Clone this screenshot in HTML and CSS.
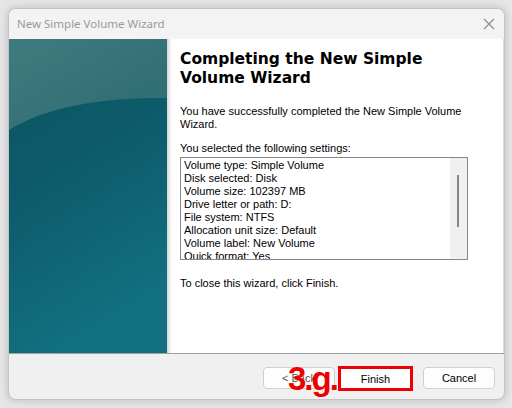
FILE: index.html
```html
<!DOCTYPE html>
<html>
<head>
<meta charset="utf-8">
<link rel="stylesheet" href="styles.css">
</head>
<body>
<div class="window">
  <div class="titlebar">
    <span class="title">New Simple Volume Wizard</span>
    <svg class="close" width="12" height="12" viewBox="0 0 12 12"><path d="M1 1L11 11M11 1L1 11" stroke="#8a8a8a" stroke-width="1.1" fill="none"/></svg>
  </div>
  <div class="content">
    <div class="banner">
      <svg width="158" height="314" viewBox="0 0 158 314" preserveAspectRatio="none">
        <defs>
          <linearGradient id="top" x1="0" y1="0" x2="1" y2="1">
            <stop offset="0" stop-color="#3f7b7e"/>
            <stop offset="1" stop-color="#2d6a72"/>
          </linearGradient>
          <linearGradient id="main" x1="0" y1="0" x2="0.3" y2="1">
            <stop offset="0" stop-color="#0b5260"/>
            <stop offset="0.5" stop-color="#0d5c6b"/>
            <stop offset="1" stop-color="#127080"/>
          </linearGradient>
        </defs>
        <rect width="158" height="314" fill="url(#main)"/>
        <path d="M0 0H158V59C100 58 40 66 0 91Z" fill="url(#top)"/>
      </svg>
    </div>
    <div class="shade"></div>
    <div class="page">
      <h1>Completing the New Simple Volume Wizard</h1>
      <p class="intro">You have successfully completed the New Simple Volume Wizard.</p>
      <p class="label">You selected the following settings:</p>
      <div class="listbox">
        <div class="items">
          <div>Volume type: Simple Volume</div>
          <div>Disk selected: Disk</div>
          <div>Volume size: 102397 MB</div>
          <div>Drive letter or path: D:</div>
          <div>File system: NTFS</div>
          <div>Allocation unit size: Default</div>
          <div>Volume label: New Volume</div>
          <div>Quick format: Yes</div>
        </div>
        <div class="scrollbar"><div class="thumb"></div></div>
      </div>
      <p class="closing">To close this wizard, click Finish.</p>
    </div>
  </div>
  <div class="footer">
    <button class="btn">&lt; Back</button>
    <button class="btn finish">Finish</button>
    <button class="btn cancel">Cancel</button>
    <span class="step">3.g.</span>
  </div>
</div>
</body>
</html>
```
FILE: styles.css
```css
html, body {
  margin: 0;
  padding: 0;
}
body {
  width: 512px;
  height: 408px;
  background: #e6e6e6;
  overflow: hidden;
  font-family: "Liberation Sans", Arial, sans-serif;
}
.window {
  box-sizing: border-box;
  margin: 8px 0 0 8px;
  width: 497px;
  height: 392px;
  border: 1px solid #c4c4c4;
  border-radius: 8px;
  background: #f0f0f0;
  box-shadow: 0 0 6px 2px rgba(0,0,0,0.12);
  overflow: hidden;
  display: flex;
  flex-direction: column;
}
.titlebar {
  height: 30px;
  flex: none;
  background: #f3f3f3;
  display: flex;
  align-items: center;
  justify-content: space-between;
  padding: 0 9px 0 8px;
}
.title {
  font-family: "Noto Sans", sans-serif;
  font-size: 11.5px;
  color: #9a9a9a;
  margin-top: -1px;
}
.close {
  display: block;
}
.content {
  height: 314px;
  flex: none;
  display: flex;
  background: #fff;
  border-right: 1px solid #dcdcdc;
}
.banner {
  width: 158px;
  flex: none;
}
.banner svg {
  display: block;
}
.shade {
  width: 5px;
  flex: none;
  background: linear-gradient(to right, #d4d4d4, #f4f4f4 70%, #fff);
}
.page {
  flex: 1;
  padding: 11px 0 0 8px;
  color: #000;
  font-size: 11px;
}
h1 {
  margin: 0;
  font-family: "DejaVu Sans", Verdana, sans-serif;
  font-weight: bold;
  font-size: 15.5px;
  line-height: 19px;
  width: 260px;
}
p {
  margin: 0;
  line-height: 13px;
}
.intro {
  margin-top: 17px;
  width: 295px;
}
.label {
  margin-top: 11px;
}
.listbox {
  margin-top: 2px;
  width: 288px;
  height: 103px;
  box-sizing: border-box;
  border: 1px solid #828790;
  display: flex;
  overflow: hidden;
  background: #fff;
}
.items {
  flex: 1;
  padding: 1px 0 0 3px;
  line-height: 13px;
  overflow: hidden;
}
.scrollbar {
  width: 17px;
  flex: none;
  background: #f0f0f0;
  position: relative;
}
.thumb {
  position: absolute;
  left: 7px;
  top: 17px;
  width: 2px;
  height: 52px;
  background: #858585;
}
.closing {
  margin-top: 17px;
}
.footer {
  flex: 1;
  border-top: 1px solid #a0a0a0;
  display: flex;
  align-items: flex-start;
  padding: 13px 0 0 254px;
  position: relative;
}
.btn {
  box-sizing: border-box;
  width: 72px;
  height: 22px;
  border: 1px solid #d0d0d0;
  border-radius: 4px;
  background: #fdfdfd;
  font-family: "Liberation Sans", Arial, sans-serif;
  font-size: 11px;
  color: #000;
  padding: 0;
}
.btn:first-child {
  color: #555;
}
.finish {
  width: 75px;
  height: 25px;
  margin: -1px 0 0 3px;
  border: 3px solid #ee0000;
  border-radius: 0;
  background: #fff;
}
.cancel {
  margin-left: 10px;
}
.step {
  position: absolute;
  left: 279px;
  top: 7px;
  font-family: "Liberation Sans", Arial, sans-serif;
  font-weight: bold;
  font-size: 33px;
  letter-spacing: -2px;
  color: #ee0000;
  line-height: 36px;
}
```
